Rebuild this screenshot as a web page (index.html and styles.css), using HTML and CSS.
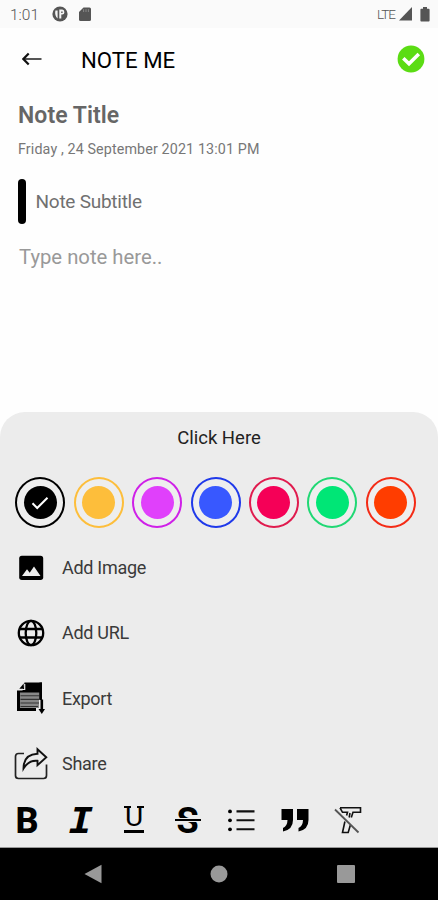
FILE: index.html
```html
<!DOCTYPE html>
<html lang="en">
<head>
<meta charset="utf-8">
<meta name="viewport" content="width=device-width, initial-scale=1">
<title>Note Me</title>
<link rel="stylesheet" href="styles.css">
</head>
<body>
<div class="screen">
  <header class="status">
    <span class="clock">1:01</span>
    <svg class="st-app" width="16" height="16" viewBox="0 0 16 16"><circle cx="8" cy="8" r="7.6" fill="#555"/><path d="M3.4 4.5Q2.4 9.5 5.6 12.6V4.5ZM7.3 3.6H10.2Q12.4 3.8 12.4 6.2T10.2 8.6H9.3V12.6H7.3Z" fill="#f4f4f4"/><path d="M9.2 5.4H10.6V6.9H9.2Z" fill="#555"/></svg>
    <svg class="st-card" width="12" height="15" viewBox="0 0 12 15"><path d="M4.5.5H10.5Q12 .5 12 2V12.5Q12 14 10.5 14H1.5Q0 14 0 12.5V5Z" fill="#555"/><path d="M4.6 2.2V5M7 2.2V5M9.4 2.2V5" stroke="#888"/></svg>
    <span class="lte">LTE</span>
    <svg class="st-signal" width="13" height="14" viewBox="0 0 13 14"><path d="M13 0V13.5H0Z" fill="#555"/></svg>
    <svg class="st-battery" width="10" height="15" viewBox="0 0 10 15"><path d="M3 0H7V1.8H8.7Q9.6 1.8 9.6 2.8V13.4Q9.6 14.4 8.7 14.4H1.2Q.4 14.4.4 13.4V2.8Q.4 1.8 1.2 1.8H3Z" fill="#555"/></svg>
  </header>
  <div class="appbar">
    <svg class="back" width="20" height="14" viewBox="0 0 20 14"><path d="M1 7H19.5" stroke="#555" stroke-width="2"/><path d="M6.7 1.5L1.4 7L6.7 12.5" fill="none" stroke="#111" stroke-width="2.2"/></svg>
    <h1>NOTE ME</h1>
    <svg class="done" width="28" height="28" viewBox="0 0 28 28"><circle cx="14" cy="14" r="13.4" fill="#5bdc14"/><path d="M6.3 13.2L12 18.7L21.8 9" fill="none" stroke="#fff" stroke-width="3.6"/></svg>
  </div>
  <main class="note">
    <h2>Note Title</h2>
    <p class="date">Friday , 24 September 2021 13:01 PM</p>
    <div class="subtitle"><i class="bar"></i><span>Note Subtitle</span></div>
    <p class="body">Type note here..</p>
  </main>
  <section class="sheet">
    <div class="handle">Click Here</div>
    <div class="colors">
      <div class="ring black"><i class="dot"><svg width="18" height="14" viewBox="0 0 18 14"><path d="M1.5 7.3L6.2 12L16.5 1.7" fill="none" stroke="#fff" stroke-width="2"/></svg></i></div>
      <div class="ring amber"><i class="dot"></i></div>
      <div class="ring purple"><i class="dot"></i></div>
      <div class="ring blue"><i class="dot"></i></div>
      <div class="ring pink"><i class="dot"></i></div>
      <div class="ring green"><i class="dot"></i></div>
      <div class="ring orange"><i class="dot"></i></div>
    </div>
    <ul class="menu">
      <li><svg width="34" height="34" viewBox="0 0 34 34"><rect x="5.2" y="4.7" width="24" height="24.2" rx="2.7"/><path d="M8 25L13 18.2L15.7 21.7L20 15.4L26.5 25Z" fill="#ececec"/></svg><span>Add Image</span></li>
      <li><svg width="34" height="34" viewBox="0 0 34 34"><g fill="none" stroke="#000" stroke-width="2.3"><circle cx="17" cy="17" r="12.2"/><ellipse cx="17" cy="17" rx="5.3" ry="12.2"/><path d="M5.5 13H28.5M5.5 21.5H28.5"/></g></svg><span>Add URL</span></li>
      <li><svg width="34" height="34" viewBox="0 0 34 34"><path d="M10.5 1.5H28V27H22V30H3V9.5H8.5Z"/><path d="M5.3 7.7L9.7 2.5V7.7Z"/><path d="M5 8.5H10.7V3" fill="none" stroke="#ececec" stroke-width="1.2"/><path d="M6 11.5H25.5V27H6Z" fill="#888"/><path d="M6.5 14.8H25.5M6.5 18.4H25.5M6.5 22H25.5M6.5 25.5H24" stroke="#333" stroke-width="1.1"/><path d="M25 19H31V34H25Z" fill="#ececec"/><path d="M25.5 1.5H28V18H25.5Z"/><path d="M27.8 18.5V30" stroke="#000" stroke-width="2.6"/><path d="M24.5 28H31L27.8 33Z"/></svg><span>Export</span></li>
      <li><svg width="34" height="34" viewBox="0 0 34 34"><path d="M10 6.5H4.5Q1.5 6.5 1.5 9.5V28.5Q1.5 31.5 4.5 31.5H29.5Q32.5 31.5 32.5 28.5V17.5" fill="none" stroke="#222" stroke-width="1.7"/><path d="M23.5 2.2L32.3 10.3L23.5 18.2V13.8Q14.8 12.8 9.5 21.5Q9.5 7.4 23.5 6.8Z" fill="none" stroke="#111" stroke-width="1.9"/></svg><span>Share</span></li>
    </ul>
    <div class="tools">
      <span class="tool t-bold">B</span>
      <span class="tool t-italic">I</span>
      <span class="tool t-under">U</span>
      <span class="tool t-strike">S</span>
      <svg width="28" height="28" viewBox="0 0 28 28"><path d="M9.5 5.4H27.5M9.5 14.3H27.5M9.5 23.3H27.5" stroke="#111" stroke-width="2.1"/><circle cx="3" cy="5.4" r="1.9"/><circle cx="3" cy="14.3" r="1.9"/><circle cx="3" cy="23.3" r="1.9"/></svg>
      <svg width="28" height="28" viewBox="0 0 28 28"><path d="M.5 3H12V14Q12 23.5 2 25.5V22Q6.4 20 6.5 14H.5ZM16 3H27.5V14Q27.5 23.5 17.5 25.5V22Q21.9 20 22 14H16Z"/></svg>
      <svg width="28" height="28" viewBox="0 0 28 28"><g fill="none" stroke="#111" stroke-width="1.6"><path d="M6 1.8H26.5V6.3H19L17.3 11.5M6 1.8L8.5 6.3H13.5L12.6 9.5M10.9 15.5L8.5 26.5H14.2L16.3 19.3M16 7L15.2 11.5"/></g><path d="M1 3.5L24.5 26.5" stroke="#555" stroke-width="1.8"/></svg>
    </div>
  </section>
  <nav class="navbar">
    <svg width="18" height="20" viewBox="0 0 18 20"><path d="M17.5.8V19.2L.5 10Z" fill="#999"/></svg>
    <svg width="18" height="18" viewBox="0 0 18 18"><circle cx="9" cy="9" r="8.5" fill="#999"/></svg>
    <svg width="18" height="18" viewBox="0 0 18 18"><rect width="18" height="18" rx="1" fill="#999"/></svg>
  </nav>
</div>
</body>
</html>
```
FILE: styles.css
```css
* { box-sizing: border-box; margin: 0; padding: 0; }
body { background: #fefefe; font-family: Roboto, "Liberation Sans", sans-serif; }
svg { display: block; flex: none; }
.screen { width: 438px; height: 900px; display: flex; flex-direction: column; overflow: hidden; }
.status { height: 28px; background: #fafafa; display: flex; align-items: center; padding: 0 8px 0 10px; color: #555; white-space: nowrap; }
.clock { width: 42px; font-size: 15.5px; font-weight: 300; padding-top: 1px; }
.st-card { margin-left: 11px; }
.lte { margin-left: auto; font-size: 13.5px; font-weight: 300; letter-spacing: -1px; margin-right: 4px; }
.st-battery { margin-left: 8px; }
.appbar { height: 62px; display: flex; align-items: center; padding: 0 13px 0 22px; }
.appbar h1 { font-size: 22.2px; font-weight: 400; color: #000; margin-left: 39px; padding-top: 1px; line-height: 26px; }
.done { margin-left: auto; }
.note { height: 322px; padding: 13px 18px 0; white-space: nowrap; }
.note h2 { font-size: 23px; line-height: 26px; font-weight: 600; letter-spacing: .05px; color: #666; }
.date { margin-top: 11px; font-size: 14.3px; line-height: 18px; letter-spacing: .12px; color: #777; }
.subtitle { display: flex; align-items: center; gap: 10px; height: 45px; margin-top: 21px; font-size: 19px; letter-spacing: -.25px; color: #707070; }
.bar { width: 7.5px; height: 45px; border-radius: 4px; background: #000; }
.body { margin-top: 20px; padding-left: 1px; font-size: 20.3px; line-height: 26px; color: #999; }
.sheet { height: 436px; background: #ececec; border-radius: 25px 25px 0 0; border-bottom: 1px solid #999; }
.handle { height: 51px; padding-top: 1px; line-height: 50px; text-align: center; font-size: 18.5px; color: #222; }
.colors { display: flex; gap: 8.4px; padding: 14px 0 0 15.4px; height: 80px; }
.ring { width: 50px; height: 51px; border: 2.4px solid; border-radius: 50%; display: flex; align-items: center; justify-content: center; background: #eee; flex: none; }
.dot { width: 33px; height: 33px; border-radius: 50%; background: currentColor; display: flex; align-items: center; justify-content: center; flex: none; }
.black { color: #000; }
.amber { color: #fdbe3b; }
.purple { color: #e040fb; border-color: #cf20e8; }
.blue { color: #3858ff; border-color: #1f39ea; }
.pink { color: #f50057; border-color: #e01b4e; }
.green { color: #00e676; border-color: #20d874; }
.orange { color: #ff3d00; border-color: #f42b16; }
.menu { list-style: none; margin-top: -8px; }
.menu li { height: 65.3px; display: flex; align-items: center; gap: 14px; padding-left: 14px; font-size: 18px; letter-spacing: -.3px; color: #3a3a3a; }
.tools { height: 49px; display: flex; align-items: center; gap: 25.5px; padding-left: 13px; margin-top: -1px; }
.tool { width: 28px; height: 28px; line-height: 28px; text-align: center; color: #000; position: relative; }
.t-bold { font-size: 36px; font-weight: 800; line-height: 30px; }
.t-italic { font-family: "DejaVu Sans Mono", monospace; font-weight: 700; font-style: italic; font-size: 35px; line-height: 30px; transform: scaleX(1.16); }
.t-under { font-size: 28px; line-height: 21px; font-weight: 400; }
.t-under::before { content: ""; position: absolute; left: 4px; right: 4px; top: 0; height: 2px; background: linear-gradient(90deg, #000 7px, transparent 7px, transparent 13px, #000 13px); }
.t-under::after { content: ""; position: absolute; left: 4px; right: 4px; top: 24px; height: 3px; background: #000; }
.t-strike { font-size: 36px; font-weight: 700; line-height: 30px; }
.t-strike::after { content: ""; position: absolute; left: 1px; right: 1px; top: 13px; height: 2px; background: #000; box-shadow: 0 0 0 1px #ececec; }
.navbar { flex: 1; background: #000; display: flex; align-items: center; justify-content: center; gap: 108.5px; }
```
